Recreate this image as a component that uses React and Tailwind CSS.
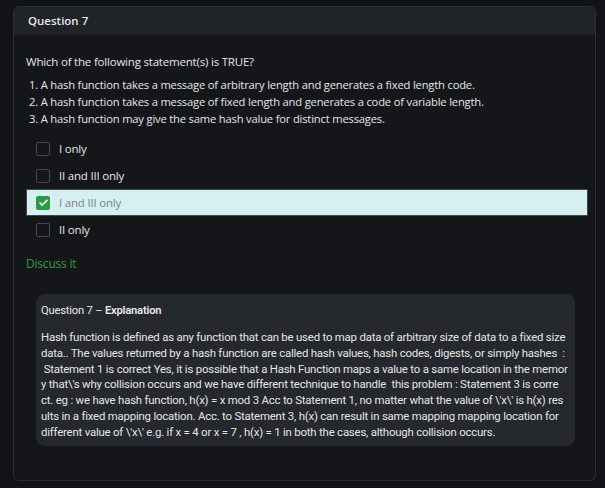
const options = [
  { label: "I only", checked: false },
  { label: "II and III only", checked: false },
  { label: "I and III only", checked: true },
  { label: "II only", checked: false },
];

const explanation = [
  "Hash function is defined as any function that can be used to map data of arbitrary size of data to a fixed size",
  "data.. The values returned by a hash function are called hash values, hash codes, digests, or simply hashes  :",
  "\u00a0Statement 1 is correct Yes, it is possible that a Hash Function maps a value to a same location in the memor",
  "y that\\'s why collision occurs and we have different technique to handle  this problem : Statement 3 is corre",
  "ct. eg : we have hash function, h(x) = x mod 3 Acc to Statement 1, no matter what the value of \\'x\\' is h(x) res",
  "ults in a fixed mapping location. Acc. to Statement 3, h(x) can result in same mapping mapping location for",
  "different value of \\'x\\' e.g. if x = 4 or x = 7 , h(x) = 1 in both the cases, although collision occurs.",
];

function Check() {
  return (
    <svg viewBox="0 0 16 16" className="h-[11px] w-[11px]">
      <path d="M3 8.5l3.2 3.2L13 4.8" fill="none" stroke="#fff" strokeWidth="2.4" strokeLinecap="round" strokeLinejoin="round" />
    </svg>
  );
}

export default function App() {
  return (
    <div className="min-h-[488px] w-[605px] bg-[#111316] pl-[13px] pr-[9px] pt-[6px] pb-[7px]" style={{ fontFamily: '"Open Sans", sans-serif' }}>
      <div className="h-[475px] overflow-hidden rounded-[6px] border border-[#2b2e33] bg-[#141619]">
        <div className="flex h-[28px] items-center bg-[#202327] pl-[14px] text-[11.5px] font-semibold text-[#e8e8e8]">
          Question 7
        </div>
        <div className="pl-[12px] pr-[7px]">
          <div className="mt-[18px] text-[11.5px] tracking-[-0.2px] text-[#e6e6e6]">Which of the following statement(s) is TRUE?</div>
          <div className="mt-[6px] pl-[3px] text-[11.2px] leading-[17px] tracking-[-0.18px] text-[#e6e6e6]">
            <div>1. A hash function takes a message of arbitrary length and generates a fixed length code.</div>
            <div>2. A hash function takes a message of fixed length and generates a code of variable length.</div>
            <div>3. A hash function may give the same hash value for distinct messages.</div>
          </div>
          <div className="mt-[8px] flex flex-col">
            {options.map((o) => (
              <div
                key={o.label}
                className={
                  o.checked
                    ? "flex h-[27px] items-center gap-[9px] border border-[#3e4a4a] bg-[#d6eff0] pl-[9px]"
                    : "flex h-[27px] items-center gap-[9px] border border-transparent pl-[9px]"
                }
              >
                {o.checked ? (
                  <span className="flex h-[14px] w-[14px] items-center justify-center rounded-[2px] bg-[#2a9a49]">
                    <Check />
                  </span>
                ) : (
                  <span className="h-[14px] w-[14px] rounded-[2px] border border-[#45484d] bg-[#141619]" />
                )}
                <span className={o.checked ? "text-[11.5px] tracking-[-0.2px] text-[#7a8588]" : "text-[11.5px] tracking-[-0.2px] text-[#e4e4e4]"}>
                  {o.label}
                </span>
              </div>
            ))}
          </div>
          <div className="mt-[12px] text-[12px] font-medium tracking-[-0.2px] text-[#2f9d44]">Discuss it</div>
          <div className="ml-[10px] mr-[13px] mt-[21px] rounded-[9px] bg-[#25282c] px-[5px] pb-[5px] pt-[9px]" style={{ fontFamily: '"Roboto", sans-serif' }}>
            <div className="text-[11.2px] tracking-[-0.2px] text-[#e8e8e8]">
              Question 7 – <span className="font-semibold">Explanation</span>
            </div>
            <div className="mt-[10px] whitespace-pre text-[11.4px] leading-[15.8px] tracking-[-0.2px] text-[#e6e6e6]">
              {explanation.map((l, i) => (
                <div key={i}>{l}</div>
              ))}
            </div>
          </div>
        </div>
      </div>
    </div>
  );
}
